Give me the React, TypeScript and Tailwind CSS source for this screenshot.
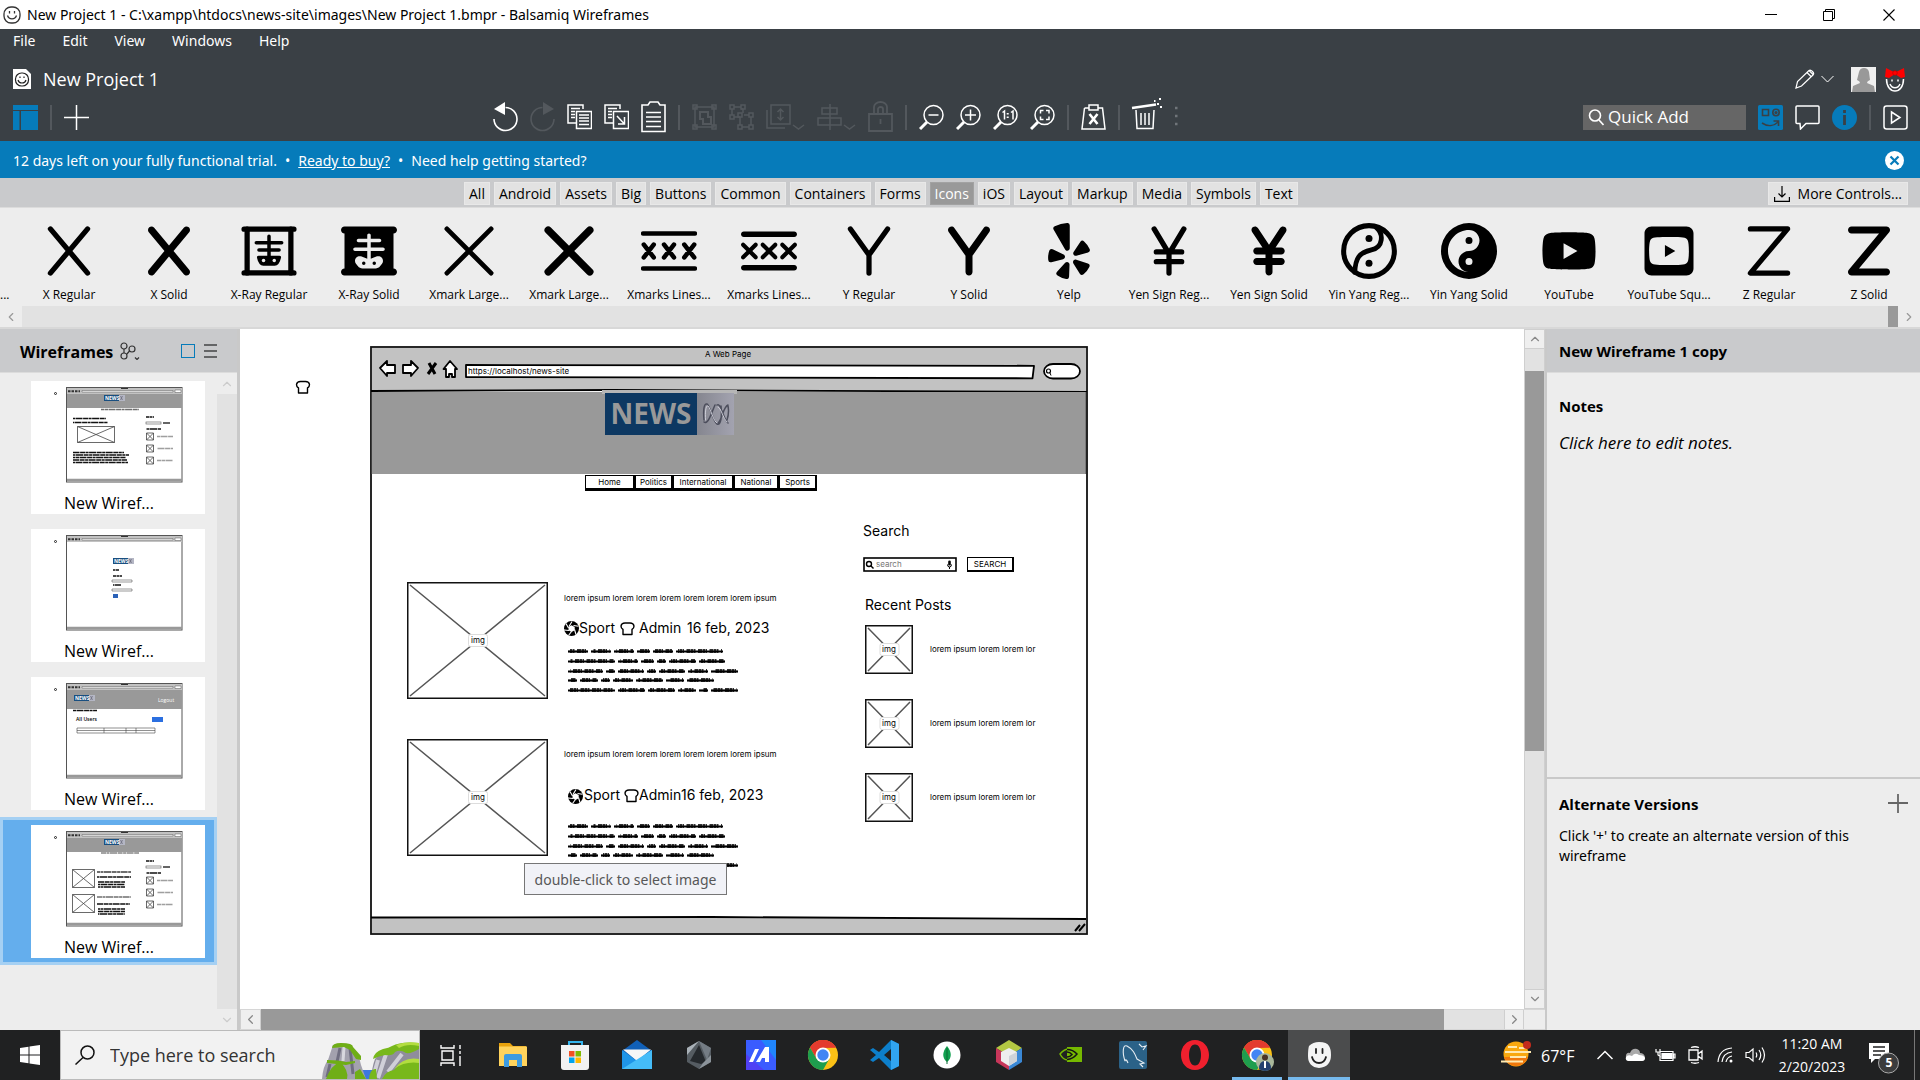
import React from "react";
import { FaX, FaY, FaZ, FaXRay, FaXmarksLines, FaYelp, FaYenSign, FaYinYang, FaYoutube, FaSquareYoutube } from "react-icons/fa6";
import { ChevronDown, ChevronLeft, ChevronRight, ChevronUp } from "lucide-react";

type IconProps = { box?: string; className?: string; sw?: number; children: React.ReactNode };

function Line({ box = "0 0 25 32", className = "h-8 w-[25px]", sw = 1.5, children }: IconProps) {
  return (
    <svg viewBox={box} className={className} fill="none" stroke="currentColor" strokeWidth={sw} aria-hidden="true">
      {children}
    </svg>
  );
}

function Tool({ label, dim, children }: { label: string; dim?: boolean; children: React.ReactNode }) {
  return (
    <button type="button" aria-label={label} title={label} className={dim ? "shrink-0 text-[#53585d]" : "shrink-0 text-white"}>
      {children}
    </button>
  );
}

const Divider = () => <span className="h-[25px] w-0.5 shrink-0 bg-[#53585d]" />;

/* ---------- window chrome ---------- */

function TitleBar() {
  return (
    <div className="flex h-[29px] shrink-0 items-center bg-white pl-[3px] font-['Noto_Sans',sans-serif] text-black">
      <Line box="0 0 18 18" className="h-[18px] w-[18px] text-[#333]" sw={1.3}>
        <rect x="1" y="1" width="16" height="16" rx="7" />
        <path d="M4.500 9.500c1.500 4.500 7.500 4.500 9 0" />
        <path d="M6.500 5v2.500M11.500 5v2.500" />
      </Line>
      <span className="ml-1.5 text-sm">New Project 1 - C:\xampp\htdocs\news-site\images\New Project 1.bmpr - Balsamiq Wireframes</span>
      <div className="ml-auto flex">
        <button type="button" aria-label="Minimize" className="flex w-[58px] justify-center">
          <Line box="0 0 12 12" className="h-3 w-3" sw={1}><path d="M0 5.500h12" /></Line>
        </button>
        <button type="button" aria-label="Restore" className="flex w-[58px] justify-center">
          <Line box="0 0 12 12" className="h-3 w-3" sw={1}><path d="M.5 2.500h9v9h-9zM2.500 2.500v-2h9v9h-2" /></Line>
        </button>
        <button type="button" aria-label="Close" className="flex w-[62px] justify-center">
          <Line box="0 0 12 12" className="h-3 w-3" sw={1.1}><path d="M.5.5l11 11M11.500.5l-11 11" /></Line>
        </button>
      </div>
    </div>
  );
}

const zoomBase = (
  <>
    <circle cx="14.500" cy="14" r="9.500" />
    <path d="M8 21l-7 7" strokeWidth="3" />
  </>
);

function Toolbar() {
  return (
    <div className="flex h-[38px] items-center">
      <div className="flex w-[493px] items-center gap-3 pl-[13px]">
        <Tool label="Toggle wireframes">
          <svg viewBox="0 0 25 25" className="h-[25px] w-[25px] text-[#067bba]" fill="currentColor"><path d="M0 0h25v5H0zM0 6h6.500v19H0zM8 6h17v19H8z" /></svg>
        </Tool>
        <Divider />
        <Tool label="New wireframe"><Line box="0 0 25 25" className="h-[25px] w-[25px]" sw={1.5}><path d="M0 12.500h25M12.500 0v25" /></Line></Tool>
      </div>
      <div className="flex items-center gap-3">
        <Tool label="Undo"><Line sw={1.6}><path d="M1 18a11.500 11.500 0 1 0 11.500-11.500" /><path d="M1 8L12 1v13z" fill="currentColor" stroke="none" /></Line></Tool>
        <Tool label="Redo" dim><Line sw={1.6}><path d="M24 18a11.500 11.500 0 1 1-11.500-11.500" /><path d="M24 8L13 1v13z" fill="currentColor" stroke="none" /></Line></Tool>
        <Tool label="Copy"><Line>
          <path d="M9 22H1V4h15v4" /><path d="M4 7.500h9M4 10.500h4M4 13.500h4M4 16.500h4" />
          <path d="M9.500 10.500h15v17h-15z" /><path d="M12 14h10M12 17h10M12 20h10M12 23.500h10" />
        </Line></Tool>
        <Tool label="Duplicate"><Line>
          <path d="M9 22H1V4h15v4" /><path d="M4 7.500h9M4 10.500h4M4 13.500h4M4 16.500h4" />
          <path d="M9.500 10.500h15v17h-15z" /><path d="M13 15l7 7.500M20.500 16v7h-6.500" />
        </Line></Tool>
        <Tool label="Paste"><Line sw={1.6}>
          <path d="M7 4H1v26.500h23V4h-5l-2-3H9L7 4z" /><path d="M5 11.500h15M5 16h15M5 20.500h15M5 25.500h15" />
        </Line></Tool>
        <Divider />
        <Tool label="Group" dim><Line>
          <path d="M3 6h19v20H3z" /><path d="M1 4h4v4H1zM20 4h4v4h-4zM1 24h4v4H1zM20 24h4v4h-4z" /><path d="M8 11h8v5h3v7h-8v-5H8z" strokeWidth="2" />
        </Line></Tool>
        <Tool label="Ungroup" dim><Line>
          <path d="M5 6h7M3 8v6M14 8v4M5 16h6M11 16v8M13 26h7M22 16v8M15 14h5M14 8l-2 0" />
          <path d="M1 4h4v4H1zM12 4h4v4h-4zM1 14h4v4H1zM9 24h4v4H9zM20 24h4v4h-4zM20 12h4v4h-4zM9 12h4v4H9z" />
        </Line></Tool>
        <Tool label="Arrange" dim><Line box="0 0 39 32" className="h-8 w-[39px]">
          <path d="M5 4h19v19H5zM1 9v18h18" /><path d="M14.500 8v11M11.500 11l3-3 3 3M11.500 16l3 3 3-3M27 24l5.500 4 5.500-4" />
        </Line></Tool>
        <Tool label="Align" dim><Line box="0 0 39 32" className="h-8 w-[39px]">
          <path d="M13 3v26M5 7h15v6H5zM1 17h23v7H1zM27 24l5.500 4 5.500-4" />
        </Line></Tool>
        <Tool label="Lock" dim><Line sw={1.8}><path d="M1 13h23v17H1zM6 13V6a6.500 5 0 0 1 13 0v7M10 13V8a2.500 2 0 0 1 5 0v5M12.500 18v5" /></Line></Tool>
        <Divider />
        <Tool label="Zoom out"><Line>{zoomBase}<path d="M9.500 14h10" /></Line></Tool>
        <Tool label="Zoom in"><Line>{zoomBase}<path d="M9 14h11M14.500 8.500v11" /></Line></Tool>
        <Tool label="Actual size"><Line>{zoomBase}<path d="M9.500 11.500l2-1.500v8.500M18 11.500l2-1.500v8.500" /><path d="M14.700 12v1.500M14.700 15.500v1.500" strokeWidth="2" /></Line></Tool>
        <Tool label="Zoom to fit"><Line>{zoomBase}<path d="M10.500 12.500v-3h3M16 9.500h3v3M19 15.500v3h-3M13.500 18.500h-3v-3" /></Line></Tool>
        <Divider />
        <Tool label="Delete mockup"><Line>
          <path d="M3.500 7h4M17.500 7h4l2.500 21H1L3.500 7M8 4h9v5H8z" /><path d="M8.500 13l8 10M16.500 13l-8 10" strokeWidth="2.600" />
        </Line></Tool>
        <Divider />
        <Tool label="Trash"><Line box="0 0 30 32" className="h-8 w-[30px] overflow-visible">
          <path d="M4 9l1 18.500h16L22 9M9 12v12M13 12v12M17 12v12" /><path d="M0 7l24-3.500" strokeWidth="2.500" />
          <path d="M22 0h1.500M27-2h2M25 3h2M28 6h2" strokeWidth="2" />
        </Line></Tool>
        <Line box="0 0 4 32" className="h-8 w-1 text-[#70757a]" sw={2.500}><path d="M1 7h2.500M1 15h2.500M1 23h2.500" /></Line>
      </div>
      <div className="ml-auto flex items-center gap-3 pr-3">
        <label className="flex h-[25px] w-[163px] items-center bg-[#666] pl-[5px] text-white">
          <Line box="0 0 16 18" className="h-[18px] w-4 shrink-0" sw={1.6}><circle cx="7" cy="7.500" r="5.500" /><path d="M11 12l4.500 5" /></Line>
          <input aria-label="Quick Add" placeholder="Quick Add" className="ml-1 w-full min-w-0 bg-transparent text-[17px] placeholder-white outline-none" />
        </label>
        <Tool label="UI library">
          <svg viewBox="0 0 25 25" className="h-[25px] w-[25px]" fill="none" stroke="#3a4045" strokeWidth="1.600">
            <rect width="25" height="25" rx="1.500" fill="#067bba" stroke="none" /><path d="M4.500 4.500h6v6h-6z" /><circle cx="18" cy="7.500" r="3.200" /><circle cx="18" cy="7.500" r=".8" /><path d="M4 18c6 4 12 3 16-1M15.500 16h5v5" />
          </svg>
        </Tool>
        <Tool label="Comments"><Line box="0 0 25 25" className="h-[25px] w-[25px]"><path d="M2 1h21q1 0 1 1v15.500q0 1-1 1H11L5.500 24l-.5-5.500H2q-1 0-1-1V2q0-1 1-1z" /></Line></Tool>
        <Tool label="Project info">
          <svg viewBox="0 0 25 25" className="h-[25px] w-[25px]"><circle cx="12.500" cy="12.500" r="12.500" fill="#067bba" /><path d="M12.500 10v10M12.500 5v3" stroke="#3a4045" strokeWidth="2.800" /></svg>
        </Tool>
        <Divider />
        <Tool label="Full screen presentation"><Line box="0 0 25 25" className="h-[25px] w-[25px]"><rect x="1" y="1" width="23" height="23" rx="2.500" /><path d="M8.500 7l8.500 5.500-8.500 5.500z" /></Line></Tool>
      </div>
    </div>
  );
}

function Header() {
  return (
    <header className="flex h-28 shrink-0 flex-col bg-[#3a4045] text-white">
      <nav className="flex h-6 items-center gap-[27px] pl-[13px] font-['Noto_Sans',sans-serif] text-sm">
        {["File", "Edit", "View", "Windows", "Help"].map((m) => <button type="button" key={m}>{m}</button>)}
      </nav>
      <div className="flex h-[45px] items-center pt-[7px] pl-[13px] pr-3.5">
        <svg viewBox="0 0 18 20" className="h-5 w-[18px]" fill="#fff">
          <path d="M0 0h13l5 5v15H0z" /><rect x="2.500" y="4" width="13" height="13" rx="6" fill="none" stroke="#222" strokeWidth="1.200" /><path d="M5 11c1 4 7 4 8 0M7 7.500v1.500M11 7.500v1.500" fill="none" stroke="#222" strokeWidth="1.200" />
        </svg>
        <h1 className="ml-3 text-lg">New Project 1</h1>
        <button type="button" aria-label="Edit mode" className="ml-auto flex items-center gap-1.5">
          <Line box="0 0 20 20" className="h-5 w-5" sw={1.2}><path d="M1 19l1.500-6.500L14 1.500q1.500-1 3.500 1t.5 3.500L6.500 17zM12 3.500l4 4M14 1.500l4 4" /></Line>
          <Line box="0 0 13 8" className="h-2 w-[13px]" sw={1}><path d="M.5 1l6 6 6-6" /></Line>
        </button>
        <svg viewBox="0 0 25 25" className="ml-[17px] h-[25px] w-[25px]"><path d="M0 0h25v25H0z" fill="#efefef" /><path d="M8 5q1-4 5-4t5 4l1 8q-3 1-3 3l7 3 1 6H1l1-6 7-3q0-2-3-3z" fill="#999" /></svg>
        <svg viewBox="0 0 22 25" className="ml-2 h-[25px] w-[22px]" fill="none" stroke="#fff" strokeWidth="1.500">
          <path d="M2.500 12c0 16 17 16 17 0M6 17c2 5 8 5 10 0M8 12.500v2M14 12.500v2" />
          <path d="M11 5.500L2 1 1 10l4 1 6-4 6 4 4-1-1-9z" fill="#f00" stroke="none" />
          <circle cx="11" cy="6" r="2.300" fill="#f00" stroke="#b00" strokeWidth=".7" />
        </svg>
      </div>
      <Toolbar />
    </header>
  );
}

function Banner() {
  return (
    <div className="flex h-[37px] shrink-0 items-center gap-2 bg-[#067bba] px-[13px] pt-0.5 font-['Noto_Sans',sans-serif] text-sm text-white">
      <span>12 days left on your fully functional trial.</span>
      <span>•</span>
      <a href="#buy" className="underline">Ready to buy?</a>
      <span>•</span>
      <a href="#help">Need help getting started?</a>
      <button type="button" aria-label="Dismiss" className="ml-auto mr-[3px]">
        <svg viewBox="0 0 19 19" className="h-[19px] w-[19px]"><circle cx="9.500" cy="9.500" r="9.500" fill="#fff" /><path d="M5.500 5.500l8 8M13.500 5.500l-8 8" stroke="#067bba" strokeWidth="2.200" /></svg>
      </button>
    </div>
  );
}

/* ---------- UI library ---------- */

const categories = ["All", "Android", "Assets", "Big", "Buttons", "Common", "Containers", "Forms", "Icons", "iOS", "Layout", "Markup", "Media", "Symbols", "Text"];

function Categories() {
  return (
    <div className="flex h-[30px] shrink-0 items-center border-b border-[#dcdcdc] bg-[#c9cacc] pt-0.5 pr-3 text-sm text-black">
      <div className="ml-[464px] flex gap-1">
        {categories.map((c) => (
          <button type="button" key={c} className={c === "Icons" ? "h-[23px] border border-[#a2a2a2] bg-[#999] px-1 text-white" : "h-[23px] border border-[#e8e8e8] bg-[#e2e2e2] px-1"}>{c}</button>
        ))}
      </div>
      <button type="button" className="ml-auto flex h-[23px] items-center gap-2 border border-[#e8e8e8] bg-[#e2e2e2] px-[5px]">
        <Line box="0 0 16 16" className="h-4 w-4" sw={1.2}><path d="M8 0v11M4.500 7.500L8 11l3.500-3.500M.6 11v4.400h14.800V11" /></Line>
        More Controls...
      </button>
    </div>
  );
}

function Glyph({ sw = 48, children }: { sw?: number; children: React.ReactNode }) {
  return (
    <svg viewBox="0 0 512 512" className="h-14 w-14" fill="none" stroke="currentColor" strokeWidth={sw} strokeLinecap="round" strokeLinejoin="round" aria-hidden="true">
      {children}
    </svg>
  );
}

const controls: [string, React.ReactNode][] = [
  ["X Regular", <Glyph><path d="M86 54l340 404M426 54L86 458" /></Glyph>],
  ["X Solid", <FaX />],
  ["X-Ray Regular", <Glyph><path d="M28 56h456M28 456h456" strokeWidth="48" /><path d="M56 56v400M456 56v400" strokeWidth="48" /><path d="M256 122v180M140 180h232M164 246h184" strokeWidth="32" /><path d="M160 300h192q18 0 14 18-16 72-58 72H204q-42 0-58-72-4-18 14-18z" fill="currentColor" stroke="none" /><circle cx="206" cy="342" r="16" fill="#ededed" stroke="none" /><circle cx="304" cy="342" r="16" fill="#ededed" stroke="none" /></Glyph>],
  ["X-Ray Solid", <FaXRay />],
  ["Xmark Large...", <Glyph sw={44}><path d="M54 54l404 404M458 54L54 458" /></Glyph>],
  ["Xmark Large...", <Glyph sw={68}><path d="M66 66l380 380M446 66L66 446" /></Glyph>],
  ["Xmarks Lines...", <Glyph sw={42}><path d="M20 96h472M20 416h472" /><path d="M26 198l90 116M116 198L26 314M211 198l90 116M301 198l-90 116M396 198l90 116M486 198l-90 116" /></Glyph>],
  ["Xmarks Lines...", <FaXmarksLines />],
  ["Y Regular", <Glyph><path d="M86 54l170 238L426 54M256 292v166" /></Glyph>],
  ["Y Solid", <FaY />],
  ["Yelp", <FaYelp />],
  ["Yen Sign Reg...", <Glyph><path d="M120 54l136 226L392 54M256 280v178M140 264h232M140 354h232" /></Glyph>],
  ["Yen Sign Solid", <FaYenSign />],
  ["Yin Yang Reg...", <Glyph sw={46}><circle cx="256" cy="256" r="232" /><path d="M322 40c70 60 66 180-44 206-110 26-146 70-152 206" strokeWidth="44" /><circle cx="256" cy="142" r="32" fill="currentColor" stroke="none" /><circle cx="256" cy="368" r="32" fill="currentColor" stroke="none" /></Glyph>],
  ["Yin Yang Solid", <FaYinYang />],
  ["YouTube", <FaYoutube />],
  ["YouTube Squ...", <FaSquareYoutube />],
  ["Z Regular", <Glyph><path d="M86 54h340L86 458h340" /></Glyph>],
  ["Z Solid", <FaZ />],
];

function Library() {
  return (
    <>
      <div className="flex h-[98px] shrink-0 overflow-hidden bg-[#ededed] text-xs text-black">
        <div className="flex w-[19px] shrink-0 items-end pb-[3px]"><span className="leading-4">...</span></div>
        {controls.map(([name, icon], i) => (
          <button type="button" key={i} className="flex w-[100px] shrink-0 flex-col items-center justify-start pt-[15px] leading-4">
            <span className="flex h-14 text-[56px]">{icon}</span>
            <span className="mt-2">{name}</span>
          </button>
        ))}
      </div>
      <div className="flex h-[23px] shrink-0 items-center border-b-2 border-[#d8d8d8] bg-[#e2e2e2] text-[#999]">
        <button type="button" aria-label="Scroll left" className="flex h-full w-[22px] items-center justify-center bg-[#ededed]"><ChevronLeft size={14} /></button>
        <span className="ml-auto h-full w-2.5 bg-[#999]" />
        <button type="button" aria-label="Scroll right" className="flex h-full w-[22px] items-center justify-center bg-[#ededed]"><ChevronRight size={14} /></button>
      </div>
    </>
  );
}

/* ---------- navigator ---------- */

function ThumbLogo({ x, y }: { x: number; y: number }) {
  return (
    <g>
      <rect x={x} y={y} width="15" height="6" fill="#1a4f80" />
      <rect x={x + 15} y={y} width="6" height="6" fill="#b4b6c4" />
      <path d={`M${x + 16.5} ${y + 1}l2 4M${x + 18.5} ${y + 1}l-2 4`} stroke="#667" strokeWidth=".7" />
      <text x={x + 1} y={y + 5} fontSize="5" fontWeight="700" fill="#fff">NEWS</text>
    </g>
  );
}

function CrossBox({ x, y, w, h }: { x: number; y: number; w: number; h: number }) {
  return <path d={`M${x} ${y}h${w}v${h}h${-w}zl${w} ${h}M${x + w} ${y}l${-w} ${h}`} fill="none" stroke="#444" strokeWidth=".8" />;
}

function Scrawl({ x, y, w, o = 1 }: { x: number; y: number; w: number; o?: number }) {
  return <path d={`M${x} ${y}h${w}`} stroke="#111" strokeWidth="1.300" strokeDasharray="5 .5 3 .5 7 .6" strokeDashoffset={(y * 3) % 11} opacity={o} />;
}

function ThumbSide() {
  return (
    <g>
      <Scrawl x={80} y={30} w={8} /><rect x="80" y="35" width="15" height="2" fill="none" stroke="#555" strokeWidth=".6" /><Scrawl x={97} y={36} w={7} />
      <Scrawl x={80} y={42} w={15} />
      {[46, 58, 70].map((y) => <g key={y}><CrossBox x={80.500} y={y} w={7} h={7} /><Scrawl x={91} y={y + 3.500} w={16} o={0.4} /></g>)}
    </g>
  );
}

function Thumb({ kind }: { kind: number }) {
  return (
    <svg viewBox="0 0 117 96" className="h-24 w-[117px]" fontFamily="Open Sans" aria-hidden="true">
      <rect x=".5" y=".5" width="115.500" height="94.500" fill="#fff" stroke="#555" />
      <path d="M1 1h115v6H1z" fill="#c2c2c2" />
      <path d="M16 3.500h91v1.500H16zM109 3h6v2.500h-6z" fill="#fff" stroke="#555" strokeWidth=".5" />
      <path d="M2 4.300h12" stroke="#333" strokeWidth="2" strokeDasharray="2.500 1" />
      <path d="M55 1.500h7" stroke="#333" />
      <path d="M1 93h115" stroke="#999" strokeWidth="2.500" />
      {kind !== 1 && <path d={kind === 2 ? "M1 7h115v19H1z" : "M1 7h115v14H1z"} fill="#999" />}
      {kind === 0 && <g><ThumbLogo x={38} y={8} /><Scrawl x={35} y={22.500} w={38} o={0.6} /><ThumbSide /><Scrawl x={7} y={31.500} w={33} /><Scrawl x={7} y={35.500} w={35} /><CrossBox x={11.500} y={39.500} w={37} h={16} /><Scrawl x={7} y={65.500} w={51} /><Scrawl x={7} y={68} w={56} /><Scrawl x={7} y={70.500} w={53} /><Scrawl x={7} y={73} w={54} /><Scrawl x={7} y={75.500} w={55} /></g>}
      {kind === 1 && <g><ThumbLogo x={47} y={23} /><Scrawl x={47} y={35} w={6} /><Scrawl x={47} y={41} w={9} /><path d="M46 45h20v2H46zM46 54h20v2H46z" fill="none" stroke="#555" strokeWidth=".6" /><Scrawl x={47} y={50} w={8} /><path d="M47 59h5v4h-5z" fill="#2b62b8" /></g>}
      {kind === 2 && <g><ThumbLogo x={8} y={12} /><text x="92" y="18.500" fontSize="5" fill="#fff">Logout</text><Scrawl x={7} y={27.500} w={24} /><text x="10" y="37.500" fontSize="5" fontWeight="600">All Users</text><path d="M86 34h11v5H86z" fill="#2b6fe0" /><path d="M11 45h78v5H11zM11 47.500h78M38 45v5M60 45v5M70 45v5" fill="none" stroke="#444" strokeWidth=".6" /></g>}
      {kind === 3 && <g><ThumbLogo x={38} y={8} /><Scrawl x={35} y={22} w={38} o={0.5} /><ThumbSide /><CrossBox x={6.500} y={38.500} w={22} h={18} /><CrossBox x={6.500} y={63.500} w={22} h={18} /><Scrawl x={31} y={41} w={34} o={0.8} /><Scrawl x={31} y={46} w={34} />{[51, 53.500, 56].map((y) => <Scrawl key={y} x={32} y={y} w={27} />)}<Scrawl x={31} y={66} w={34} o={0.6} /><Scrawl x={31} y={73} w={33} />{[78, 80.500, 83].map((y) => <Scrawl key={y} x={32} y={y} w={27} />)}</g>}
    </svg>
  );
}

function Navigator() {
  return (
    <aside className="flex w-60 shrink-0 flex-col border-r-[3px] border-[#c9c9c9] bg-[#ededed] text-black">
      <div className="flex h-11 items-center border-b border-[#dcdcdc] bg-[#c9cacc] pl-5 pr-5">
        <h2 className="pt-0.5 text-base font-bold">Wireframes</h2>
        <Line box="0 0 20 18" className="ml-[7px] h-[18px] w-5 text-[#333]" sw={1.2}><circle cx="4" cy="4" r="3" /><circle cx="4" cy="14" r="3" /><circle cx="12" cy="7" r="3" /><path d="M4 7v4M6.500 12.500l3-3.500M15 15.500l2 2 2-2" /></Line>
        <button type="button" aria-label="Thumbnails" className="ml-auto mr-[9px] h-3.5 w-3.5 border border-[#067bba]" />
        <button type="button" aria-label="List"><Line box="0 0 13 14" className="h-3.5 w-[13px]" sw={1.2}><path d="M0 1h13M0 7h13M0 13h13" /></Line></button>
      </div>
      <div className="flex min-h-0 flex-1">
        <div className="flex-1">
          {[0, 1, 2, 3].map((k) => (
            <button type="button" key={k} className={k === 3 ? "flex h-[148px] w-full items-start border-[3px] border-[#a5d0f3] bg-[#64aeed] pt-[5px] pl-7 text-left" : "flex h-[148px] w-full items-start pt-2 pl-[31px] text-left"}>
              <span className="flex h-[133px] w-[174px] flex-col bg-white pt-1.5">
                <span className="flex"><span className="mt-[5px] ml-[23px] mr-[9px] h-[3px] w-[3px] rounded-full border border-[#222]" /><Thumb kind={k} /></span>
                <span className="mt-2 pl-[33px] text-base leading-6">New Wiref...</span>
              </span>
            </button>
          ))}
        </div>
        <div className="flex w-5 flex-col justify-between bg-[#e2e2e2] text-[#ccc]">
          <button type="button" aria-label="Scroll up" className="flex h-[21px] items-center justify-center bg-[#ededed]"><ChevronUp size={14} /></button>
          <button type="button" aria-label="Scroll down" className="flex h-[21px] items-center justify-center bg-[#ededed]"><ChevronDown size={14} /></button>
        </div>
      </div>
    </aside>
  );
}

/* ---------- canvas ---------- */

function SketchImage({ x, y, w, h }: { x: number; y: number; w: number; h: number }) {
  return (
    <g>
      <rect x={x + 0.75} y={y + 0.75} width={w - 1.5} height={h - 1.5} fill="#fff" stroke="#111" strokeWidth="1.500" />
      <path d={`M${x + 3} ${y + 3}l${w - 6} ${h - 6}M${x + w - 3} ${y + 3}l${6 - w} ${h - 6}`} stroke="#555" strokeWidth="1.500" />
      <rect x={x + w / 2 - 9} y={y + h / 2 - 6} width="19" height="12" rx="2" fill="#fff" stroke="#ddd" />
    </g>
  );
}

const Bread = ({ x, y }: { x: number; y: number }) => (
  <path transform={`translate(${x} ${y})`} d="M3 12.500h9V7.500q2-1 2-3.500-.5-3-4-3H5q-3.500 0-4 3 0 2.500 2 3.500z" fill="#fff" stroke="#000" strokeWidth="1.400" strokeLinejoin="round" />
);

const Aperture = ({ x, y }: { x: number; y: number }) => (
  <g transform={`translate(${x} ${y})`}>
    <circle cx="7.500" cy="7.500" r="7.500" />
    <path d="M5 5.500L8 .5M9.500 4.500l5 .8M10.500 8.500l1.500 5M7.500 10.500l-3 4M5 9.500l-5-.5M4.500 7L2 2.500" stroke="#fff" strokeWidth="1.100" />
    <path d="M7.500 4.200l3.200 1.700v3.400l-3.200 1.700-3-1.700V5.900z" fill="#fff" />
  </g>
);

const scribbleRows = [
  [20, 20, 20, 13, 20, 47],
  [47, 20, 13, 9, 27, 26],
  [35, 9, 26, 9, 26, 20, 27],
  [9, 18, 9, 20, 27, 18, 27],
  [47, 27, 27, 18, 9, 27],
];

function Scribble({ y }: { y: number }) {
  return (
    <g fill="none" stroke="#000">
      {scribbleRows.map((row, r) => {
        let x = 568;
        return row.map((w, i) => {
          const at = x;
          x += w + 3;
          const yy = y + Math.round(r * 9.8);
          return <g key={`${r}-${i}`}><path d={`M${at} ${yy + 0.5}h${w}`} strokeWidth="2.200" /><path d={`M${at + 2} ${yy}h${w - 3}`} strokeWidth="4" strokeDasharray="2.500 .5 1.500 2.500 4 .5" strokeDashoffset={(r + i) * 2} opacity=".8" /></g>;
        });
      })}
    </g>
  );
}

const navBoxes: [string, string][] = [
  ["Home", "w-[50px]"],
  ["Politics", "w-[38px]"],
  ["International", "w-[61px]"],
  ["National", "w-[45px]"],
  ["Sports", "w-[38px]"],
];

function Mockup() {
  return (
    <div className="absolute top-[7px] left-[120px] h-[610px] w-[740px] font-['Inter',sans-serif] text-black">
      <svg viewBox="360 336 740 610" className="absolute inset-0 h-full w-full" aria-hidden="true">
        <rect x="371" y="347" width="716" height="587" fill="#fff" stroke="#111" strokeWidth="1.800" />
        <path d="M372 348h714v43H372z" fill="#c2c2c2" />
        <path d="M371 391l240-1 476 2" stroke="#000" strokeWidth="1.800" fill="none" />
        <path d="M371 392h716v82H371z" fill="#999" />
        <path d="M371 392v82M1086.500 392v82" stroke="#222" strokeWidth="1.500" />
        <path d="M602 390h135v4H602z" fill="#b6b6b6" />
        <path d="M372 918h714v15H372z" fill="#c2c2c2" />
        <path d="M371 917.500l340-.5 375 2" stroke="#000" strokeWidth="1.800" fill="none" />
        <path d="M1075 931l5-6M1079 931l6-7" stroke="#000" strokeWidth="2" />
        <g fill="#fff" stroke="#000" strokeWidth="1.800" strokeLinejoin="round">
          <path d="M380 368l7-7v4h8v8h-8v3z" />
          <path d="M418 368l-7-7v4h-8v8h8v3z" />
          <path d="M443.500 369l6.500-8 7 8h-2v8h-3v-3h-3v3h-3v-8z" />
          <path d="M466 365l568 .8-1.500 12.500L466 377z" />
          <rect x="1044" y="364" width="36" height="14.500" rx="9" />
        </g>
        <path d="M429 363l6 11M436 363l-8 11" stroke="#000" strokeWidth="3" />
        <circle cx="1048.500" cy="371" r="2" fill="none" stroke="#000" strokeWidth="1.200" /><path d="M1050 373l1 2.500" stroke="#000" />
        <SketchImage x={407} y={582} w={141} h={117} />
        <SketchImage x={407} y={739} w={141} h={117} />
        <SketchImage x={865} y={625} w={48} h={49} />
        <SketchImage x={865} y={699} w={48} h={49} />
        <SketchImage x={865} y={773} w={48} h={49} />
        <Aperture x={564} y={621} /><Bread x={620} y={622} />
        <Aperture x={568} y={789} /><Bread x={624} y={789} />
        <Scribble y={651} /><Scribble y={826} />
        <rect x="864" y="558" width="92" height="13" fill="#fff" stroke="#000" strokeWidth="1.600" />
        <g fill="none" stroke="#000" strokeWidth="1.400"><circle cx="869" cy="564" r="2.500" /><path d="M871 566l2.500 2.500" /></g>
        <path d="M947.500 564.500q0 2.500 2 2.500t2-2.500M949.500 567v2" fill="none" stroke="#000" />
        <rect x="948.200" y="560.500" width="2.600" height="5" rx="1.300" />
      </svg>

      <span className="absolute top-2.5 left-[268px] w-[200px] text-center text-[8px] leading-4">A Web Page</span>
      <input aria-label="Address" defaultValue="https://localhost/news-site" className="absolute top-[27px] left-[108px] h-4 w-[400px] bg-transparent text-[8px] outline-none" />

      <div className="absolute top-[57px] left-[245px] flex h-[42px] w-[129px]">
        <span className="flex w-[92px] items-center justify-center bg-[#0d3862] pb-0.5 font-['Open_Sans',sans-serif] text-[28px] leading-none font-bold text-[#999]">NEWS</span>
        <span className="flex flex-1 items-center justify-center bg-linear-to-r from-[#85868f] to-[#a3a3b0]">
          <svg viewBox="0 0 28 24" className="h-6 w-7" fill="none" stroke="#4c4e5c" strokeWidth="1.500" strokeLinecap="round">
            <path d="M2 18C1 8 2 1 5 2s6 18 10 20 5-8 4-18M2 20c4 3 7-8 11-17M15 3c4-3 6 14 11 18M16 21c4-3 5-16 10-18M26 4c1 5 0 11-1 14" />
            <path d="M3.500 18C3 9 4 3 6 4s6 17 9 17M16 5c3 0 5 12 9 15" stroke="#d6d6e0" strokeWidth=".9" />
          </svg>
        </span>
      </div>

      <div className="absolute top-[139px] left-[225px] flex text-[8px] leading-none">
        {navBoxes.map(([t, w]) => (
          <button type="button" key={t} className={`flex h-4 items-center justify-center border-t border-r-2 border-b-[3px] border-l border-black bg-white text-center ${w}`}>{t}</button>
        ))}
      </div>

      <h3 className="absolute top-[187px] left-[503px] text-sm leading-4">Search</h3>
      <input aria-label="search" placeholder="search" className="absolute top-[220px] left-[516px] h-4 w-16 bg-transparent text-[8px] placeholder-[#777] outline-none" />
      <button type="button" className="absolute top-[221px] left-[607px] h-[15px] w-[47px] border border-r-2 border-b-2 border-black bg-white text-[8px] leading-none">SEARCH</button>
      <h3 className="absolute top-[261px] left-[505px] text-sm leading-4">Recent Posts</h3>

      <span className="absolute top-[296px] left-[109px] w-[18px] text-center text-[8px] leading-4">img</span>
      <span className="absolute top-[453px] left-[109px] w-[18px] text-center text-[8px] leading-4">img</span>
      <span className="absolute top-[305px] left-[520px] w-[18px] text-center text-[8px] leading-4">img</span>
      <span className="absolute top-[379px] left-[520px] w-[18px] text-center text-[8px] leading-4">img</span>
      <span className="absolute top-[453px] left-[520px] w-[18px] text-center text-[8px] leading-4">img</span>

      <p className="absolute top-[254px] left-[204px] text-[8px] leading-4 whitespace-nowrap">lorem ipsum lorem lorem lorem lorem lorem lorem ipsum</p>
      <p className="absolute top-[410px] left-[204px] text-[8px] leading-4 whitespace-nowrap">lorem ipsum lorem lorem lorem lorem lorem lorem ipsum</p>
      <p className="absolute top-[305px] left-[570px] text-[8px] leading-4 whitespace-nowrap">lorem ipsum lorem lorem lor</p>
      <p className="absolute top-[379px] left-[570px] text-[8px] leading-4 whitespace-nowrap">lorem ipsum lorem lorem lor</p>
      <p className="absolute top-[453px] left-[570px] text-[8px] leading-4 whitespace-nowrap">lorem ipsum lorem lorem lor</p>

      <span className="absolute top-[284px] left-[219px] text-sm leading-4">Sport</span>
      <span className="absolute top-[284px] left-[279px] text-sm leading-4">Admin</span>
      <span className="absolute top-[284px] left-[327px] text-sm leading-4 whitespace-nowrap">16 feb, 2023</span>
      <span className="absolute top-[451px] left-[224px] text-sm leading-4">Sport</span>
      <span className="absolute top-[451px] left-[279px] text-sm leading-4">Admin</span>
      <span className="absolute top-[451px] left-[321px] text-sm leading-4 whitespace-nowrap">16 feb, 2023</span>

      <div role="tooltip" className="absolute top-[527px] left-[164px] flex h-8 w-[203px] items-center justify-center border border-[#767676] bg-[#f1f2f7] pt-px font-['Noto_Sans',sans-serif] text-sm whitespace-nowrap text-[#575757]">double-click to select image</div>
    </div>
  );
}

function Canvas() {
  return (
    <main className="flex min-w-0 flex-1 flex-col bg-white">
      <div className="flex min-h-0 flex-1">
        <div className="relative min-w-0 flex-1 overflow-hidden">
          <svg viewBox="0 0 16 14" className="absolute top-[51px] left-[55px] h-3.5 w-4" aria-hidden="true"><Bread x={0.5} y={0.5} /></svg>
          <Mockup />
        </div>
        <div className="flex w-[21px] flex-col border-x border-[#cfcfcf] bg-[#e2e2e2] text-[#888]">
          <button type="button" aria-label="Scroll up" className="flex h-5 items-center justify-center border-y border-[#cfcfcf] bg-[#efefef]"><ChevronUp size={14} /></button>
          <span className="mt-[22px] h-[380px] bg-[#999]" />
          <button type="button" aria-label="Scroll down" className="mt-auto flex h-5 items-center justify-center border-y border-[#cfcfcf] bg-[#efefef]"><ChevronDown size={14} /></button>
        </div>
      </div>
      <div className="flex h-[21px] border-y border-[#d6d6d6] bg-[#e2e2e2] text-[#888]">
        <button type="button" aria-label="Scroll left" className="flex w-[21px] items-center justify-center border-x border-[#cfcfcf] bg-[#efefef]"><ChevronLeft size={15} /></button>
        <span className="-my-px flex-1 bg-[#999]" />
        <span className="w-[60px]" />
        <button type="button" aria-label="Scroll right" className="flex w-5 items-center justify-center border-x border-[#cfcfcf] bg-[#efefef]"><ChevronRight size={15} /></button>
        <span className="w-[21px] bg-[#ededed]" />
      </div>
    </main>
  );
}

/* ---------- inspector ---------- */

function Inspector() {
  return (
    <aside className="flex w-[375px] shrink-0 flex-col border-l-2 border-[#c9c9c9] bg-[#ededed] text-black">
      <h2 className="flex h-11 items-center border-b border-[#dcdcdc] bg-[#c9cacc] pt-0.5 pl-3 font-['Noto_Sans',sans-serif] text-[15px] font-bold">New Wireframe 1 copy</h2>
      <section className="flex-1 pt-[23px] pl-3">
        <h3 className="text-[15px] leading-5 font-bold">Notes</h3>
        <p className="mt-[15px] text-[17px] leading-6 italic">Click here to edit notes.</p>
      </section>
      <section className="h-[253px] border-t-2 border-[#c9c9c9] pt-[15px] pr-3 pl-3">
        <div className="flex justify-between">
          <h3 className="text-[15px] leading-5 font-bold">Alternate Versions</h3>
          <button type="button" aria-label="Add alternate version" className="h-5"><Line box="0 0 20 20" className="h-5 w-5 text-[#666]" sw={1.800}><path d="M0 9h20M10 0v19" /></Line></button>
        </div>
        <p className="mt-3 w-[320px] font-['Noto_Sans',sans-serif] text-sm leading-5">Click '+' to create an alternate version of this wireframe</p>
      </section>
    </aside>
  );
}

/* ---------- taskbar ---------- */

function ChromeLogo() {
  return (
    <>
      <circle cx="15" cy="15" r="15" fill="#fbc116" />
      <path d="M2 7.500A15 15 0 0 1 28 7.500L15 8z" fill="#e33b2e" /><path d="M2 7.500A15 15 0 0 1 28 7.500H15L8.500 19z" fill="#e33b2e" />
      <path d="M2 7.500A15 15 0 0 0 15 30l6.500-11.500L15 22 8.500 18.800z" fill="#1e9e4e" />
      <circle cx="15" cy="15" r="7.500" fill="#fff" /><circle cx="15" cy="15" r="5.700" fill="#4285f4" />
    </>
  );
}

const apps: [string, React.ReactNode][] = [
  ["Task View", <g fill="none" stroke="#fff" strokeWidth="1.400"><path d="M5 5v3h13V5M6 11h11v9H6zM5 26v-3h13v3M24 5v4M24 16v10M24 11v3" /></g>],
  ["File Explorer", <g><path d="M1 3h11l3 3h13v4H1z" fill="#e8a20c" /><path d="M1 6.500h28V26H1z" fill="#ffd35c" /><path d="M6 27V16q0-2 2-2h14q2 0 2 2v11h-5v-7h-8v7z" fill="#3d9be0" /></g>],
  ["Microsoft Store", <g><path d="M9 6V2h13v4" fill="none" stroke="#35b5ee" strokeWidth="2" /><path d="M1 5h28v22q0 3-3 3H4q-3 0-3-3z" fill="#f2f2f2" /><path d="M9 11h5.500v5.500H9z" fill="#f25022" /><path d="M15.500 11H21v5.500h-5.500z" fill="#7fba00" /><path d="M9 17.500h5.500V23H9z" fill="#00a4ef" /><path d="M15.500 17.500H21V23h-5.500z" fill="#ffb900" /></g>],
  ["Mail", <g><path d="M0 11L15 0l15 11v18H0z" fill="#1160b7" /><path d="M1 9.500h28L15 21z" fill="#f7f7f7" /><path d="M0 10l15 11 15-11v19H0z" fill="#1f95e8" /><path d="M30 10v19H0z" fill="#45bcf8" /></g>],
  ["Armoury", <g><path d="M15 1l12 7v14l-12 7-12-7V8z" fill="#555c62" /><path d="M15 5l-9 16 11 3 5-2z" fill="#25292d" /><path d="M15 1L3 8v7z" fill="#a9b1b8" /><path d="M15 1l12 7-4 12z" fill="#747c84" /><path d="M15 29l12-7V15l-8 8z" fill="#8b939a" /></g>],
  ["MyASUS", <g><path d="M0 0h30v30H0z" fill="#3a5cff" /><path d="M15 0h15v20z" fill="#1597fa" opacity=".7" /><path d="M0 14v16h18z" fill="#5a35f0" opacity=".7" /><path d="M3 22L9 9h4L7 22zM10 22L19 7h4v15h-4v-4h-3l-2 4z" fill="#fff" /></g>],
  ["Google Chrome", <ChromeLogo />],
  ["Visual Studio Code", <g><path d="M21 0l8 4v22l-8 4L9 18l-6 4-3-2 6-5-6-5 3-2 6 4zM21 9l-7 6 7 6z" fill="#0d7fcb" fillRule="evenodd" /><path d="M21 0l8 4v22l-8 4z" fill="#31a4f0" /></g>],
  ["MongoDB", <g><circle cx="15" cy="15" r="13.500" fill="#fff" /><path d="M15 6c5 6 5 12 0 16-5-4-5-10 0-16z" fill="#12a150" /><path d="M15 8v16" stroke="#0b6b35" /></g>],
  ["NetBeans", <g><path d="M15 0l13 8-13 8L2 8z" fill="#b3c843" /><path d="M2 8v14l13 8V16z" fill="#c7365a" /><path d="M28 8v14l-13 8V16z" fill="#3a88d6" /><path d="M15 8l8 4v9l-8 5-8-5v-9z" fill="#eee" /><path d="M15 16v10l8-5v-9z" fill="#cfd3d8" /></g>],
  ["NVIDIA", <g><path d="M11 7h15v15H11z" fill="#76b900" /><g fill="none" strokeWidth="1.500"><path d="M4 14q4-5 9-5t8 5q-3 6-9 6-5 0-8-6z" stroke="#76b900" /><path d="M11 9.500q6 0 10 4.500-4 5-10 5.500M11 12q3 0 5 2.500-2 2.500-5 2.500" stroke="#141414" /></g></g>],
  ["MySQL Workbench", <g><rect x="1" y="1" width="28" height="28" rx="2" fill="#2b6288" /><path d="M7 21C4 12 5 4 9 6c6 3 8 8 10 13l7 4-4 1 3 3M7 21q1-3 3 2M21 4l3 3 4-1-3 4" fill="none" stroke="#e8eef3" strokeWidth="1.100" /></g>],
  ["Opera", <path d="M15 0c8.300 0 14 6.700 14 15s-5.700 15-14 15S1 23.300 1 15 6.700 0 15 0zm0 4.500c-4 0-6 5-6 10.500s2 10.500 6 10.500 6-5 6-10.500-2-10.500-6-10.500z" fill="#f0202e" fillRule="evenodd" />],
  ["Google Chrome profile", <g><ChromeLogo /><circle cx="23" cy="22" r="9" fill="#a9b79a" /><circle cx="23" cy="17.500" r="3" fill="#493327" /><path d="M17 29q0-8 6-8t6 8q-3 2-6 2t-6-2z" fill="#23406f" /><path d="M22 21h2v7h-2z" fill="#fff" /></g>],
  ["Balsamiq", <g><path d="M5 6q4-4 10-4 8 0 10 4 2 3 2 9 0 12-12 13Q4 27 4 16q0-7 1-10z" fill="#f5f5f5" /><path d="M8 17c2 8 12 8 14 0M12 9v4M18.500 9v4" fill="none" stroke="#222" strokeWidth="1.800" strokeLinecap="round" /></g>],
];

function Taskbar() {
  return (
    <footer className="flex h-[50px] shrink-0 items-stretch bg-[#202122] text-white">
      <button type="button" aria-label="Start" className="flex w-[60px] items-center justify-center">
        <svg viewBox="0 0 20 20" className="h-5 w-5" fill="#fff"><path d="M0 3l8.500-1.300v7.800H0zM9.500 1.500L20 0v9.500H9.500zM0 10.500h8.500v7.800L0 17zM9.500 10.500H20V20L9.500 18.500z" /></svg>
      </button>
      <label className="flex w-[360px] items-center border border-[#bbb] bg-[#f2f2f2] pl-3.5 text-[#333]">
        <Line box="0 0 20 20" className="h-5 w-5 shrink-0 text-[#111]" sw={1.500}><circle cx="12.500" cy="7.500" r="6.500" /><path d="M8 12.500l-7.500 7" /></Line>
        <input aria-label="Search" placeholder="Type here to search" className="ml-[15px] min-w-0 flex-1 bg-transparent text-lg placeholder-[#333] outline-none" />
        <svg viewBox="0 0 97 37" className="mt-[11px] h-[37px] w-[97px] shrink-0" aria-hidden="true">
          <path d="M40 28h12v9H40z" fill="#3c78e0" />
          <path d="M0 37Q1 24 6 18L11 3q10-3 18 0l8 12 2 8 5 14z" fill="#a3a1ae" />
          <path d="M18 6l-3 14M28 6l3 26M8 22l-3 13" stroke="#6f6d80" strokeWidth="3" />
          <path d="M22 5l-1 14" stroke="#d8d7de" strokeWidth="3" />
          <path d="M10 6q0-5 9-5 12 0 12 4l8 9v4l-5-1-6-9-6-3zM5 18q12 0 19 2l9-1v2l-9 2-19-2zM4 37q5-14 14-17 9 8 7 17zM33 30l5-3 6 10H33z" fill="#6fae16" />
          <path d="M49 37q1-12 4-20l8-9 36-5v34z" fill="#8f8d9c" />
          <path d="M64 12l-8 24M80 12l-14 18M56 18l-4 14" stroke="#d0cfd8" strokeWidth="4" />
          <path d="M51 17q1-7 10-10 6-1 9-3 9-5 27-3v6q-8 5-13 4-6-4-11-1-2 4-10 3-6 1-12 4zM60 37q4-8 12-9 10-13 25-10v19zM47 37q1-11 7-10l1 10z" fill="#78b81b" />
          <path d="M72 27q10-13 25-10v4q-14-2-25 6zM74 3q10-4 23-2v3q-12-3-20 2z" fill="#b3dd3f" />
        </svg>
      </label>
      {apps.map(([name, art], i) => (
        <button type="button" key={name} aria-label={name} className={i === 14 ? "flex w-[62px] items-center justify-center border-b-[3px] border-[#76b9ed] bg-[#4b4c4d] pt-[3px]" : i === 13 ? "mx-1.5 flex w-[50px] items-center justify-center border-b-[3px] border-[#76b9ed] pt-[3px]" : "flex w-[62px] items-center justify-center"}>
          <svg viewBox="0 0 30 30" className="h-[30px] w-[30px] overflow-visible">{art}</svg>
        </button>
      ))}
      <div className="ml-auto flex items-center">
        <svg viewBox="0 0 30 30" className="h-[30px] w-[30px]"><circle cx="15" cy="14" r="12.500" fill="#f9a80f" /><path d="M3 17a12.500 12.500 0 0 0 24 0z" fill="#f0780c" /><path d="M7 7h9M18 8h7M4 12h26M9 17h16M0 21.500h22" stroke="#ffe9b0" strokeWidth="2.200" /><circle cx="26" cy="5" r="4" fill="#c42b1c" /></svg>
        <span className="ml-2.5 w-[56px] pt-0.5 text-base">67°F</span>
        <Line box="0 0 16 10" className="h-2.5 w-4" sw={1.5}><path d="M.5 9L8 1.500 15.500 9" /></Line>
        <svg viewBox="0 0 20 14" className="ml-3 h-3.5 w-5"><path d="M5 12q-5-1-4-5 1-3 4-2 2-5 7-4 3 1 3 4 4 0 5 4 0 3-3 4H4z" fill="#aaa" /><path d="M3 13q-3-1-2-4 2-3 6-1 3-4 7-1 5 0 6 3 0 3-3 3z" fill="#fff" /></svg>
        <Line box="0 0 21 14" className="ml-2.5 h-3.5 w-[21px]" sw={1.2}><path d="M5 3.500h13v9H5zM18.500 6v4h1.500V6zM1 1v3h4V1M3 4v3l3 2" /><path d="M7 5.500h10v5H7z" fill="currentColor" /></Line>
        <Line box="0 0 15 18" className="ml-3 h-[18px] w-[15px]" sw={1.300}><path d="M1 4h9v10H1zM10 8l4-3v8l-4-3M3 1.500q4-1.500 8 0M3 16.500q4 1.500 8 0" /></Line>
        <Line box="0 0 16 16" className="ml-3.5 h-4 w-4" sw={1.2}><path d="M1 15Q2 2 15 1M5 15Q6 6 15 5M9 15q1-5 6-6" /><circle cx="14" cy="14" r="1.500" fill="currentColor" stroke="none" /></Line>
        <Line box="0 0 21 18" className="ml-3 h-[18px] w-[21px]" sw={1.2}><path d="M1 6.500h3L8 3v12l-4-3.500H1zM11 6.500q1.500 2.500 0 5M14 4q3.500 5 0 10M17 1.500q5 7.500 0 15" /></Line>
        <div className="w-[92px] text-center text-sm leading-[23px]"><div>11:20 AM</div><div>2/20/2023</div></div>
        <button type="button" aria-label="Notifications" className="relative mt-1.5 ml-[11px] h-[31px] w-[31px]">
          <svg viewBox="0 0 31 31" className="h-[31px] w-[31px]"><path d="M0 0h20v16H6l-4 4v-4H0z" fill="#fff" /><path d="M4 4h12M4 8h12M4 12h8" stroke="#202122" strokeWidth="1.300" /><circle cx="19.500" cy="20" r="10" fill="#3b3c3d" stroke="#aaa" /></svg>
          <span className="absolute top-3 left-3.5 w-3 text-center text-xs leading-4 font-bold">5</span>
        </button>
        <span className="ml-3.5 mr-[5px] h-[50px] w-px bg-[#777]" />
      </div>
    </footer>
  );
}

export default function App() {
  return (
    <div className="flex h-screen flex-col overflow-hidden bg-white font-['Open_Sans','Noto_Sans',sans-serif]">
      <TitleBar />
      <Header />
      <Banner />
      <Categories />
      <Library />
      <div className="flex min-h-0 flex-1">
        <Navigator />
        <Canvas />
        <Inspector />
      </div>
      <Taskbar />
    </div>
  );
}
